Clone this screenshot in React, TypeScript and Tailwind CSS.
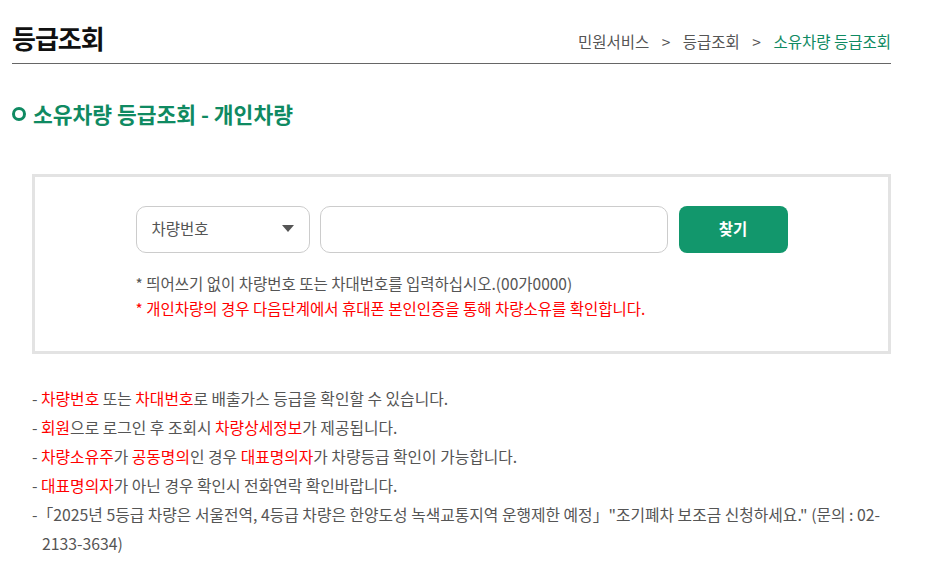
export default function App() {
  const font = { fontFamily: '"Noto Sans CJK KR", "Noto Sans", sans-serif' };
  return (
    <main className="min-h-screen bg-white" style={font}>
      <div className="w-[879px] ml-3">
        {/* Page header */}
        <div className="flex items-end justify-between h-[64px] border-b border-[#666] pb-[12px]">
          <h1 className="text-[26px] font-bold text-[#111] tracking-[-1px] leading-none">등급조회</h1>
          <div className="text-[15.5px] text-[#555] leading-none pb-[2px]">
            민원서비스 <span className="mx-[9px]">&gt;</span> 등급조회{" "}
            <span className="mx-[9px]">&gt;</span>{" "}
            <span className="text-[#0f8a62]">소유차량 등급조회</span>
          </div>
        </div>

        {/* Section title */}
        <h2 className="flex items-center gap-[7px] mt-[39px] text-[21.5px] font-bold text-[#0f8a62] leading-none">
          <span className="w-[14px] h-[14px] rounded-full border-[3px] border-[#0f8a62] inline-block"></span>
          소유차량 등급조회 - 개인차량
        </h2>

        {/* Search box */}
        <div className="ml-5 mt-[49px] border-[3px] border-[#e3e3e3] pt-[29px] pb-[33px]">
          <div className="w-[652px] mx-auto">
            <div className="flex h-[47px]">
              <div className="w-[174px] border border-[#ccc] rounded-[10px] flex items-center justify-between pl-[15px] pr-[14px] text-[15.5px] text-[#555]">
                차량번호
                <svg width="14" height="8" viewBox="0 0 14 8">
                  <path d="M1 0h12L7 7z" fill="#555" />
                </svg>
              </div>
              <input className="ml-[10px] w-[348px] border border-[#ccc] rounded-[10px] outline-none" />
              <button className="ml-[11px] w-[109px] bg-[#12976c] rounded-[8px] text-white text-[15.5px] font-bold">
                찾기
              </button>
            </div>
            <p className="mt-[20px] text-[15.5px] text-[#555] leading-[20px]">
              * 띄어쓰기 없이 차량번호 또는 차대번호를 입력하십시오.(00가0000)
            </p>
            <p className="mt-[5px] text-[15.5px] text-[#ff0000] leading-[20px]">
              * 개인차량의 경우 다음단계에서 휴대폰 본인인증을 통해 차량소유를 확인합니다.
            </p>
          </div>
        </div>

        {/* Notes */}
        <ul className="ml-5 mt-[30px] text-[15.8px] text-[#555] leading-[29px]">
          <li className="pl-[10px] -indent-[10px]">
            - <span className="text-[#ff0000]">차량번호</span> 또는{" "}
            <span className="text-[#ff0000]">차대번호</span>로 배출가스 등급을 확인할 수 있습니다.
          </li>
          <li className="pl-[10px] -indent-[10px]">
            - <span className="text-[#ff0000]">회원</span>으로 로그인 후 조회시{" "}
            <span className="text-[#ff0000]">차량상세정보</span>가 제공됩니다.
          </li>
          <li className="pl-[10px] -indent-[10px]">
            - <span className="text-[#ff0000]">차량소유주</span>가{" "}
            <span className="text-[#ff0000]">공동명의</span>인 경우{" "}
            <span className="text-[#ff0000]">대표명의자</span>가 차량등급 확인이 가능합니다.
          </li>
          <li className="pl-[10px] -indent-[10px]">
            - <span className="text-[#ff0000]">대표명의자</span>가 아닌 경우 확인시 전화연락 확인바랍니다.
          </li>
          <li className="pl-[10px] -indent-[10px]">
            -「2025년 5등급 차량은 서울전역, 4등급 차량은 한양도성 녹색교통지역 운행제한 예정」"조기폐차 보조금 신청하세요." (문의 : 02-<wbr />2133-3634)
          </li>
        </ul>
      </div>
    </main>
  );
}
